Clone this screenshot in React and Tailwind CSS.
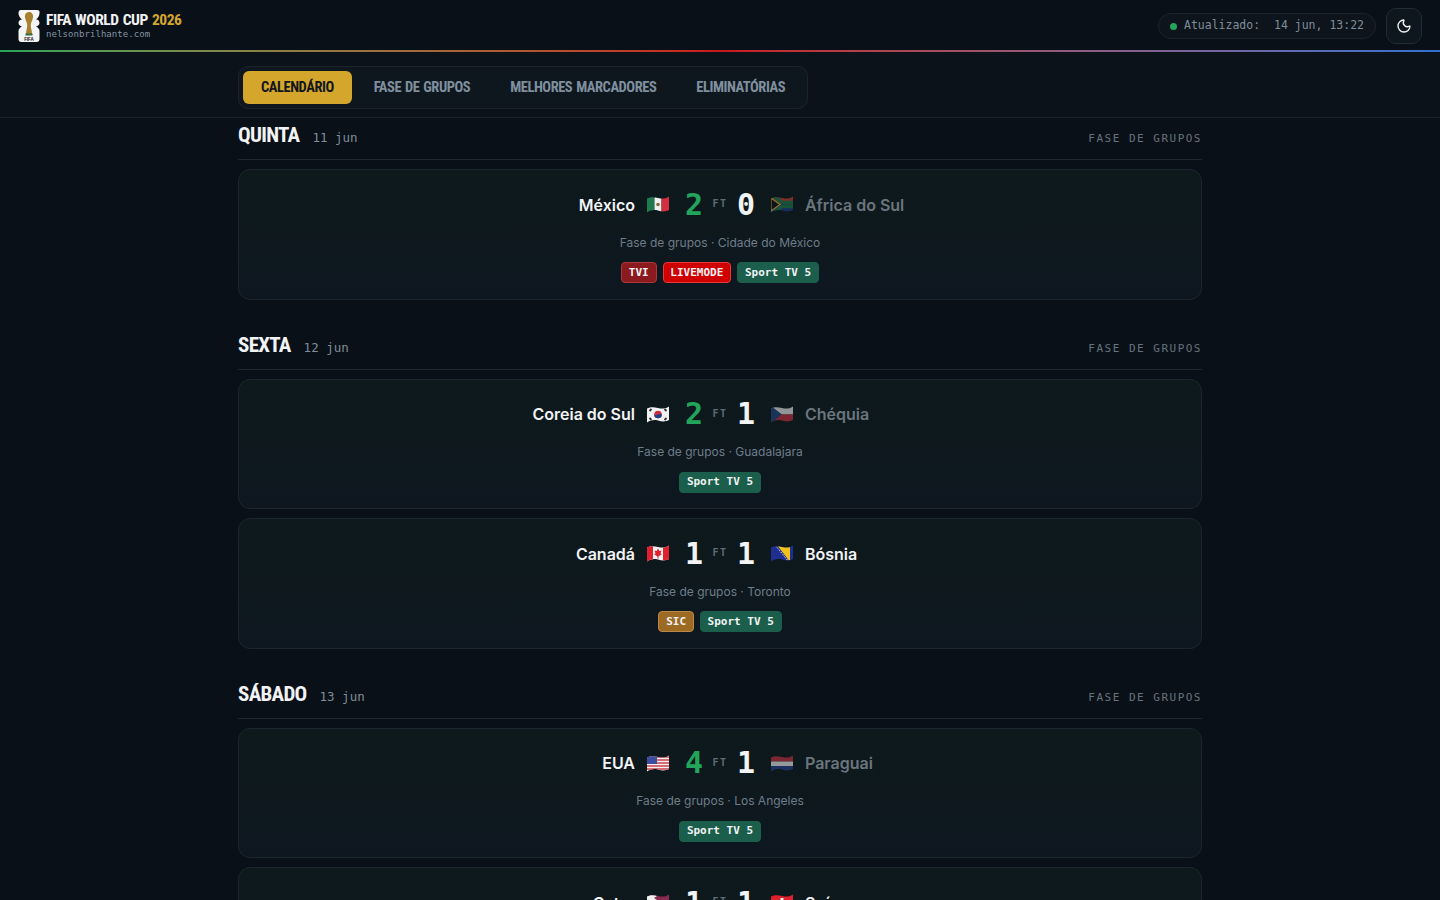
import { Moon } from 'lucide-react';

const MONO = "font-['DejaVu_Sans_Mono',monospace]";
const COND = "font-['Roboto',sans-serif] [font-stretch:75%]";

const Wave = ({ id, dim, children }) => (
  <svg width="22" height="17" viewBox="0 0 22 17" className={`shrink-0 ${dim ? 'opacity-60' : ''}`}>
    <defs>
      <clipPath id={id}>
        <path d="M0 2.500 C4 0.500 7 1 11 2 S18 3 22 0.500 V14 C18 16 15 15.500 11 14.500 S4 14 0 16.500 Z" />
      </clipPath>
    </defs>
    <g clipPath={`url(#${id})`}>{children}</g>
  </svg>
);

const flagArt = {
  mx: (
    <>
      <rect width="7.500" height="17" fill="#1f7a4d" />
      <rect x="7.500" width="7" height="17" fill="#f2f2f2" />
      <rect x="14.500" width="7.500" height="17" fill="#d32f3f" />
      <circle cx="11" cy="8.500" r="1.800" fill="#8a6d3b" />
    </>
  ),
  za: (
    <>
      <rect width="22" height="8.500" fill="#c9402f" />
      <rect y="8.500" width="22" height="8.500" fill="#1f3a8a" />
      <path d="M2 0 L11 6.500 H22 V10.500 H11 L2 17" fill="none" stroke="#1f7a4d" strokeWidth="3.500" />
      <path d="M0 2 L9 8.500 L0 15 Z" fill="#111" stroke="#e2b93b" strokeWidth="1.200" />
    </>
  ),
  kr: (
    <>
      <rect width="22" height="17" fill="#f2f2f2" />
      <circle cx="11" cy="8.500" r="3.800" fill="#c8303f" />
      <path d="M7.200 8.500 a3.800 3.800 0 0 0 7.600 0 q-1.900 -1.500 -3.800 0 t-3.800 0" fill="#1f3f8a" />
      <path d="M2.500 5 L4.500 3 M17.500 3 L19.500 5 M2.500 12 L4.500 14 M17.500 14 L19.500 12" stroke="#333" strokeWidth="1.800" />
    </>
  ),
  cz: (
    <>
      <rect width="22" height="8.500" fill="#e8e8e8" />
      <rect y="8.500" width="22" height="8.500" fill="#c8303f" />
      <path d="M0 0 L11 8.500 L0 17 Z" fill="#24467f" />
    </>
  ),
  ca: (
    <>
      <rect width="22" height="17" fill="#f2f2f2" />
      <rect width="6" height="17" fill="#e0202c" />
      <rect x="16" width="6" height="17" fill="#e0202c" />
      <path d="M11 3.500 L12.300 6 L14.500 5.500 L13.500 8.500 L15 9 L11.500 11.500 V13.500 H10.500 V11.500 L7 9 L8.500 8.500 L7.500 5.500 L9.700 6 Z" fill="#e0202c" />
    </>
  ),
  ba: (
    <>
      <rect width="22" height="17" fill="#1f2f8f" />
      <path d="M6 0 H19 V17 Z" fill="#f2c21a" />
      <path d="M4 0 L18 17" stroke="#e8e8e8" strokeWidth="1" strokeDasharray="1.500 1.500" />
    </>
  ),
  us: (
    <>
      <rect width="22" height="17" fill="#f0f0f0" />
      <path d="M0 2 H22 M0 5 H22 M0 8 H22 M0 11 H22 M0 14 H22" stroke="#d0404c" strokeWidth="1.500" />
      <rect width="10" height="9" fill="#3c4f9f" />
    </>
  ),
  py: (
    <>
      <rect width="22" height="6.500" fill="#c8303f" />
      <rect y="6.500" width="22" height="4.500" fill="#efefef" />
      <rect y="11" width="22" height="6" fill="#27408b" />
    </>
  ),
  qa: (
    <>
      <rect width="22" height="17" fill="#8a2a4f" />
      <path d="M0 0 H7 L10 2 L7 4 L10 6 L7 8 L10 10 L7 12 L10 14 L7 17 H0 Z" fill="#efefef" />
    </>
  ),
  ch: (
    <>
      <rect width="22" height="17" fill="#e0202c" />
      <path d="M9.500 4 H12.500 V7 H15.500 V10 H12.500 V13 H9.500 V10 H6.500 V7 H9.500 Z" fill="#f5f5f5" />
    </>
  ),
};

const channelStyles = {
  TVI: 'bg-[#8b1a1e] border-[#a8383c]',
  LIVEMODE: 'bg-[#d00000] border-[#e83a3a]',
  'Sport TV 5': 'bg-[#1b5e4b] border-[#1b5e4b]',
  SIC: 'bg-[#9c6a23] border-[#b98a45]',
};

const days = [
  {
    name: 'QUINTA',
    date: '11 jun',
    matches: [
      { home: 'México', away: 'África do Sul', hf: 'mx', af: 'za', hs: 2, as: 0, place: 'Cidade do México', tv: ['TVI', 'LIVEMODE', 'Sport TV 5'] },
    ],
  },
  {
    name: 'SEXTA',
    date: '12 jun',
    matches: [
      { home: 'Coreia do Sul', away: 'Chéquia', hf: 'kr', af: 'cz', hs: 2, as: 1, place: 'Guadalajara', tv: ['Sport TV 5'] },
      { home: 'Canadá', away: 'Bósnia', hf: 'ca', af: 'ba', hs: 1, as: 1, place: 'Toronto', tv: ['SIC', 'Sport TV 5'] },
    ],
  },
  {
    name: 'SÁBADO',
    date: '13 jun',
    matches: [
      { home: 'EUA', away: 'Paraguai', hf: 'us', af: 'py', hs: 4, as: 1, place: 'Los Angeles', tv: ['Sport TV 5'] },
      { home: 'Catar', away: 'Suíça', hf: 'qa', af: 'ch', hs: 1, as: 1, place: 'São Francisco', tv: ['Sport TV 5'] },
    ],
  },
];

const Logo = () => (
  <svg width="22" height="33" viewBox="0 0 22 33" className="shrink-0">
    <path d="M3 0 H19 Q22 0 21.500 3 C21.500 6 20 8 18 9.500 C20 9 21.500 11 21.500 13 C21.500 15 20 16 18 16.500 C20 17.500 21.500 19 21.500 21 V29 Q21.500 32 18.500 32 H3.500 Q0.500 32 0.500 29 V21 C0.500 19 2 17.500 4 16.500 C2 16 0.500 15 0.500 13 C0.500 11 2 9.500 4 9.500 C2 8 0.500 6 0.500 3 Q0.500 0 3 0 Z" fill="#f5f5f5" />
    <path d="M11 2 C14 2 15.500 4.500 15 7.500 C14.500 10.500 13 12 12.800 15 C12.600 18 14 20 14 24 H8 C8 20 9.400 18 9.200 15 C9 12 7.500 10.500 7 7.500 C6.500 4.500 8 2 11 2 Z" fill="#a8802f" />
    <rect x="7.500" y="23.500" width="7" height="2" fill="#2f6b3f" />
    <text x="11" y="30.500" textAnchor="middle" fontSize="4.500" fontWeight="900" fill="#111" fontFamily="Liberation Sans">FIFA</text>
  </svg>
);

const Header = () => (
  <header className="h-[50px] pt-[2px] flex items-center justify-between pl-[18px] pr-[18px] bg-[#0a1017]">
    <div className="flex items-center gap-[6px]">
      <Logo />
      <div className="flex flex-col">
        <span className={`${COND} text-[15.500px] leading-[17px] font-bold text-[#f1f3f5] tracking-[-0.45px] [word-spacing:1px]`}>
          FIFA WORLD CUP <span className="text-[#d4a72c]">2026</span>
        </span>
        <span className={`${MONO} text-[9px] leading-[11px] text-[#8494a3] tracking-[0.07px]`}>nelsonbrilhante.com</span>
      </div>
    </div>
    <div className="flex items-center gap-[10px]">
      <div className="h-[26px] flex items-center gap-[7px] pl-[11px] pr-[11px] rounded-full border border-[#1b242d] bg-[#0d141b]">
        <span className="w-[7px] h-[7px] rounded-full bg-[#22a55a]" />
        <span className={`${MONO} text-[11.500px] text-[#7f8d9a] whitespace-pre`}>Atualizado:  14 jun, 13:22</span>
      </div>
      <button className="w-9 h-9 flex items-center justify-center rounded-[10px] border border-[#222c36] bg-[#0f171e] text-[#f1f3f5]">
        <Moon size={16} />
      </button>
    </div>
  </header>
);

const Tabs = () => (
  <nav className="h-[66px] border-b border-[#1b242d] bg-[#0b1219]">
    <div className="w-[964px] mx-auto pt-[14px]">
      <div className="inline-flex items-center gap-[4px] h-[43px] p-[4px] rounded-[10px] border border-[#1b242d] bg-[#0f171e]">
        <span className={`${COND} h-[33px] flex items-center px-[18px] rounded-md bg-[#d4a72c] text-[#12161a] text-[14.500px] font-bold tracking-[-0.45px] [word-spacing:1px]`}>CALENDÁRIO</span>
        {['FASE DE GRUPOS', 'MELHORES MARCADORES', 'ELIMINATÓRIAS'].map((t) => (
          <span key={t} className={`${COND} h-[33px] flex items-center px-[18px] text-[#7f8f9e] text-[14.500px] font-bold tracking-[-0.45px] [word-spacing:1px]`}>{t}</span>
        ))}
      </div>
    </div>
  </nav>
);

const MatchCard = ({ m }) => {
  const homeLost = m.hs < m.as;
  const awayLost = m.hs > m.as;
  return (
    <article className="h-[130.500px] pt-[19.750px] rounded-xl border border-[#1c262e] bg-gradient-to-b from-[#0d191b] to-[#0e1720] flex flex-col items-center">
      <div className="w-full grid grid-cols-[1fr_102px_1fr] items-center h-[30px]">
        <div className="flex items-center justify-end gap-[12px]">
          <span className={`font-['Inter',sans-serif] text-[16px] font-semibold ${homeLost ? 'text-[#6b757d]' : 'text-[#f1f3f5]'}`}>{m.home}</span>
          <Wave id={m.hf} dim={homeLost}>{flagArt[m.hf]}</Wave>
        </div>
        <div className="flex items-center justify-center">
          <span className={`${MONO} w-[24px] text-center text-[30px] leading-none font-bold ${awayLost ? 'text-[#22a55a]' : 'text-[#f1f3f5]'}`}>{m.hs}</span>
          <span className={`${MONO} w-[28px] mb-[2px] text-center text-[10px] tracking-[1.500px] font-bold text-[#5f6c78]`}>FT</span>
          <span className={`${MONO} w-[24px] text-center text-[30px] leading-none font-bold ${homeLost ? 'text-[#22a55a]' : 'text-[#f1f3f5]'}`}>{m.as}</span>
        </div>
        <div className="flex items-center gap-[12px]">
          <Wave id={m.af} dim={awayLost}>{flagArt[m.af]}</Wave>
          <span className={`font-['Inter',sans-serif] text-[16px] font-semibold ${awayLost ? 'text-[#6b757d]' : 'text-[#f1f3f5]'}`}>{m.away}</span>
        </div>
      </div>
      <p className="mt-[14px] h-[18px] leading-[18px] font-['Inter',sans-serif] text-[12px] text-[#6f7d89]">Fase de grupos · {m.place}</p>
      <div className="mt-[10.250px] flex gap-[6px]">
        {m.tv.map((c) => (
          <span key={c} className={`${MONO} h-[21px] flex items-center pt-px px-[6.800px] rounded border text-[11px] font-bold text-[#f1f3f5] ${channelStyles[c]}`}>{c}</span>
        ))}
      </div>
    </article>
  );
};

const DaySection = ({ day }) => (
  <section className="mb-[33px]">
    <div className="h-[37px] flex items-baseline justify-between border-b border-[#1f2932] mb-[9px]">
      <div className="flex items-baseline gap-[13px]">
        <h2 className={`${COND} text-[21px] leading-[24px] font-bold tracking-[-0.7px] text-[#f1f3f5]`}>{day.name}</h2>
        <span className={`${MONO} text-[12.500px] text-[#7f8d9a]`}>{day.date}</span>
      </div>
      <span className={`${MONO} text-[11px] tracking-[1.500px] text-[#66737f]`}>FASE DE GRUPOS</span>
    </div>
    <div className="flex flex-col gap-[9px]">
      {day.matches.map((m) => (
        <MatchCard key={m.home} m={m} />
      ))}
    </div>
  </section>
);

export default function App() {
  return (
    <div className="h-screen overflow-hidden bg-[#0a1017]">
      <Header />
      <div className="h-[2px] bg-gradient-to-r from-[#22a55a] via-[#c8161d] to-[#2f6fd0]" />
      <Tabs />
      <main className="w-[964px] mx-auto pt-[5px]">
        {days.map((d) => (
          <DaySection key={d.name} day={d} />
        ))}
      </main>
    </div>
  );
}
